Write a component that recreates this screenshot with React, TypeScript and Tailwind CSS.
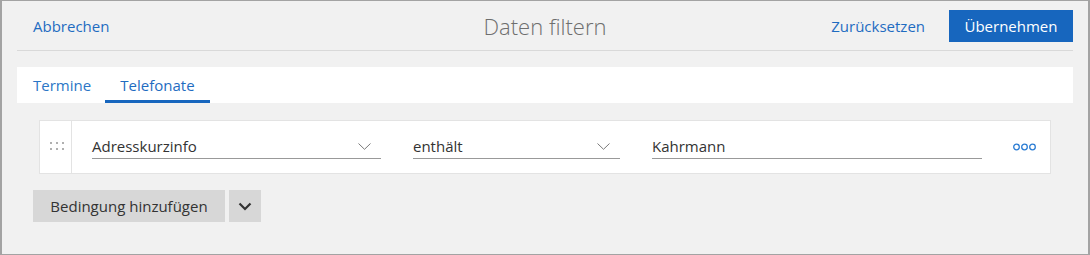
import React from "react";

function SmallChevron() {
  return (
    <svg width="13" height="7" viewBox="0 0 13 7" className="shrink-0">
      <path d="M0.5 0.5 L6.5 6.3 L12.5 0.5" fill="none" stroke="#7a7a7a" strokeWidth="1" />
    </svg>
  );
}

function Field({ w, text, dropdown }: { w: string; text: string; dropdown?: boolean }) {
  return (
    <div className={`${w} h-[24px] flex items-center justify-between border-b border-[#999999] pr-[10px]`}>
      <span className="text-[15px] text-[#333333] leading-none">{text}</span>
      {dropdown ? <SmallChevron /> : null}
    </div>
  );
}

export default function App() {
  return (
    <div className="w-[1090px] h-[255px] bg-[#f1f1f1] border-x-2 border-y border-[#a3a3a3] font-['Open_Sans',sans-serif] px-[15px]">
      {/* Header */}
      <div className="grid grid-cols-[1fr_auto_1fr] items-center pt-[9px] pb-[8px] border-b border-[#d9d9d9]">
        <div className="pl-4 text-[15px] text-[#1f6cc1]">Abbrechen</div>
        <div className="text-[22px] font-light text-[#6e6e6e] leading-none">Daten filtern</div>
        <div className="flex items-center justify-end gap-[24px]">
          <span className="text-[15px] text-[#1f6cc1]">Zurücksetzen</span>
          <button className="h-8 w-[124px] bg-[#1766be] text-white text-[15px] flex items-center justify-center">
            Übernehmen
          </button>
        </div>
      </div>

      {/* Tabs */}
      <div className="mt-4 h-9 bg-white flex">
        <div className="w-[88px] pl-4 h-full flex items-center text-[15px] text-[#2b76c6]">Termine</div>
        <div className="relative w-[105px] h-full flex items-center justify-center text-[15px] text-[#1f6cc1]">
          Telefonate
          <div className="absolute left-0 right-0 bottom-0 h-[3px] bg-[#1766be]" />
        </div>
      </div>

      {/* Condition row */}
      <div className="px-[22px] mt-[17px]">
        <div className="h-[54px] bg-white border border-[#e3e3e3] flex items-center">
          <div className="w-8 h-full border-r border-[#e3e3e3] flex items-center justify-center pl-[2px] pb-[2px]">
            <svg width="14" height="8" viewBox="0 0 14 8">
              <rect x="0" y="0" width="2" height="2" fill="#b0b0b0" />
              <rect x="6" y="0" width="2" height="2" fill="#b0b0b0" />
              <rect x="12" y="0" width="2" height="2" fill="#b0b0b0" />
              <rect x="0" y="6" width="2" height="2" fill="#b0b0b0" />
              <rect x="6" y="6" width="2" height="2" fill="#b0b0b0" />
              <rect x="12" y="6" width="2" height="2" fill="#b0b0b0" />
            </svg>
          </div>
          <div className="ml-5 flex items-center gap-8">
            <Field w="w-[289px]" text="Adresskurzinfo" dropdown />
            <Field w="w-[207px]" text="enthält" dropdown />
            <Field w="w-[330px]" text="Kahrmann" />
          </div>
          <div className="ml-[31px] flex items-center">
            <svg width="23" height="8" viewBox="0 0 23 8">
              <circle cx="3.5" cy="4" r="2.8" fill="none" stroke="#2b7cd3" strokeWidth="1.3" />
              <circle cx="11.5" cy="4" r="2.8" fill="none" stroke="#2b7cd3" strokeWidth="1.3" />
              <circle cx="19.5" cy="4" r="2.8" fill="none" stroke="#2b7cd3" strokeWidth="1.3" />
            </svg>
          </div>
        </div>
      </div>

      {/* Add condition */}
      <div className="mt-4 ml-4 flex gap-1">
        <button className="h-8 w-[192px] bg-[#d7d7d7] text-[15px] text-[#333333] flex items-center justify-center">
          Bedingung hinzufügen
        </button>
        <button className="h-8 w-8 bg-[#d7d7d7] flex items-center justify-center">
          <svg width="14" height="9" viewBox="0 0 14 9">
            <path d="M1.5 1.5 L7 7 L12.5 1.5" fill="none" stroke="#333333" strokeWidth="2.2" />
          </svg>
        </button>
      </div>
    </div>
  );
}
